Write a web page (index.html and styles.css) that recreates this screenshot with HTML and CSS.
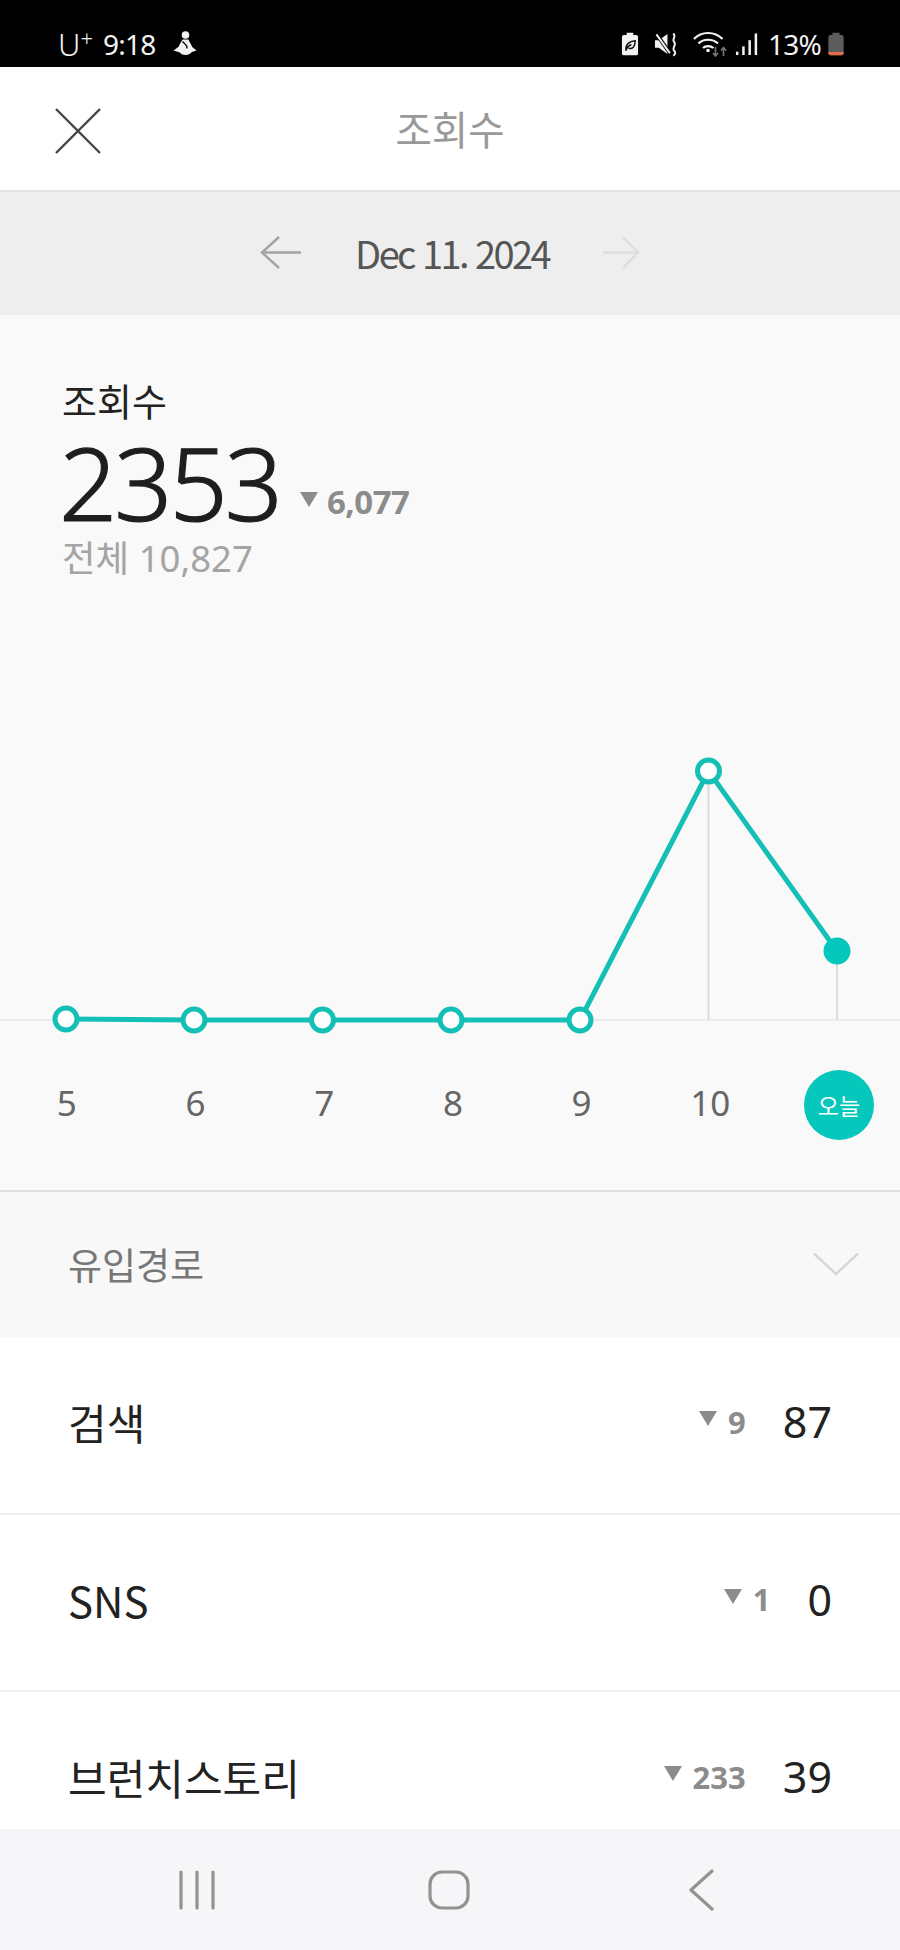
FILE: index.html
```html
<!DOCTYPE html>
<html lang="ko">
<head>
  <meta charset="UTF-8">
  <meta name="viewport" content="width=device-width, initial-scale=1.0">
  <title>조회수</title>
  <link rel="stylesheet" href="styles.css">
</head>
<body>
  <div class="screen">
    <!-- Status bar -->
    <div class="status">
      <div class="status-left">
        <span class="carrier">U<sup>+</sup></span>
        <span class="clock">9:18</span>
        <svg class="ic-person" width="24" height="27" viewBox="0 0 24 26">
          <circle cx="12.5" cy="4.500" r="3.800" fill="#f2f2f2"/>
          <path d="M9.500 9 C8 12 6 14 5.500 17 C5 21 8 24.500 12.500 24.500 C17 24.500 20 21.500 19.500 18 C19 14.500 16.500 12 15.500 9 Z" fill="#f2f2f2"/>
          <path d="M0.500 20 L6 16 L7 22 Z M23.500 20 L18.500 16 L17.500 22 Z" fill="#f2f2f2"/>
          <path d="M9.500 11 C12 14 14.500 14 14 18" stroke="#000" stroke-width="1.300" fill="none"/>
        </svg>
      </div>
      <div class="status-right">
        <svg width="18" height="26" viewBox="0 0 19 26">
          <path d="M6 1 H13 V3.500 H16 Q18 3.500 18 5.500 V23 Q18 25 16 25 H3 Q1 25 1 23 V5.500 Q1 3.500 3 3.500 H6 Z" fill="#f2f2f2"/>
          <path d="M5 19 C5 12 9 10 15 9.500 C15 16 12 18.500 8 17.500 M5 20 C6.500 16 8.500 14.500 11 13.500" stroke="#111" stroke-width="1.500" fill="none"/>
        </svg>
        <svg class="ic-mute" width="25" height="26" viewBox="0 0 26 26">
          <path d="M1 9 H5 L14 2.500 V23.500 L5 17 H1 Z" fill="#f2f2f2"/>
          <path d="M2 2 L17 23" stroke="#000" stroke-width="4"/>
          <path d="M2.500 3 L16.500 22.500" stroke="#f2f2f2" stroke-width="2"/>
          <path d="M20 2 C24 5 18 8 21 11 C24 14 18 17 21 20 C23 22 22 24 20 25" stroke="#f2f2f2" stroke-width="2" fill="none"/>
        </svg>
        <svg class="ic-wifi" width="37" height="28" viewBox="0 0 34 28">
          <path d="M1.500 9 C9 1 22 1 30 9 M6 13.500 C11 8.500 20 8.500 25.500 13.500 M10.500 18 C13 15.500 18 15.500 21 18" stroke="#f2f2f2" stroke-width="2.200" fill="none"/>
          <circle cx="15.500" cy="20.500" r="1.800" fill="#f2f2f2"/>
          <path d="M23 17 V25 M20.500 23 L23 26 L25.500 23" stroke="#777" stroke-width="1.600" fill="none"/>
          <path d="M31 26 V18 M28.500 20.500 L31 17.500 L33.500 20.500" stroke="#777" stroke-width="1.600" fill="none"/>
        </svg>
        <svg class="ic-signal" width="23" height="26" viewBox="0 0 24 26">
          <rect x="1" y="21" width="2.600" height="3.500" fill="#f2f2f2"/>
          <rect x="7.500" y="15.500" width="2.600" height="9" fill="#f2f2f2"/>
          <rect x="14" y="9" width="2.600" height="15.500" fill="#f2f2f2"/>
          <rect x="20.500" y="2" width="2.600" height="22.500" fill="#f2f2f2"/>
        </svg>
        <span class="percent">13%</span>
        <svg class="ic-battery" width="18" height="26" viewBox="0 0 20 27">
          <path d="M6 1 H14 V3.500 H16 Q18.500 3.500 18.500 6 V23.500 Q18.500 26 16 26 H4 Q1.500 26 1.500 23.500 V6 Q1.500 3.500 4 3.500 H6 Z" fill="#5c5c5c"/>
          <path d="M1.500 22.500 H18.500 V23.500 Q18.500 26 16 26 H4 Q1.500 26 1.500 23.500 Z" fill="#e8694a"/>
        </svg>
      </div>
    </div>

    <!-- App bar -->
    <header class="appbar">
      <svg class="close" width="46" height="46" viewBox="0 0 46 46">
        <path d="M1 1 L45 45 M45 1 L1 45" stroke="#444" stroke-width="2.400" fill="none"/>
      </svg>
      <h1 class="title">조회수</h1>
    </header>

    <!-- Date switcher -->
    <div class="datebar">
      <svg width="42" height="34" viewBox="0 0 42 34">
        <path d="M41 16.500 H2 M19 1 L2 16.500 L19 32" stroke="#a3a3a3" stroke-width="2.400" fill="none"/>
      </svg>
      <span class="date">Dec 11. 2024</span>
      <svg width="38" height="34" viewBox="0 0 38 34">
        <path d="M1 16.500 H36 M21 1 L36 16.500 L21 32" stroke="#dedede" stroke-width="2.400" fill="none"/>
      </svg>
    </div>

    <!-- Summary and chart -->
    <section class="stats">
      <div class="summary">
        <div class="label">조회수</div>
        <div class="total-row">
          <span class="total">2353</span>
          <span class="delta delta-big"><i class="tri"></i>6,077</span>
        </div>
        <div class="overall">전체 10,827</div>
      </div>

      <svg class="chart" width="900" height="400" viewBox="0 640 900 400">
        <path d="M0 1020 H900" stroke="#ececec" stroke-width="2"/>
        <path d="M708.500 771 V1020 M837 951 V1020" stroke="#dcdcdc" stroke-width="2"/>
        <path d="M66 1019 L194 1020 H580 L708.500 771 L837 951" stroke="#14bfb6" stroke-width="5" fill="none"/>
        <g fill="#fff" stroke="#14bfb6" stroke-width="5">
          <circle cx="66" cy="1019" r="11"/>
          <circle cx="194" cy="1020" r="11"/>
          <circle cx="322.500" cy="1020" r="11"/>
          <circle cx="451" cy="1020" r="11"/>
          <circle cx="580" cy="1020" r="11"/>
          <circle cx="708.500" cy="771" r="11"/>
        </g>
        <circle cx="837" cy="951" r="13.500" fill="#06c7bb"/>
      </svg>

      <div class="axis">
        <span>5</span>
        <span>6</span>
        <span>7</span>
        <span>8</span>
        <span>9</span>
        <span>10</span>
        <span><b class="today">오늘</b></span>
      </div>
    </section>

    <!-- Inflow header -->
    <div class="inflow">
      <span>유입경로</span>
      <svg width="46" height="24" viewBox="0 0 46 24">
        <path d="M1 1.500 L23 22 L45 1.500" stroke="#d6d6d6" stroke-width="2.400" fill="none"/>
      </svg>
    </div>

    <!-- Inflow rows -->
    <div class="rows">
      <div class="row">
        <span class="row-name">검색</span>
        <span class="delta"><i class="tri"></i>9</span>
        <span class="row-num">87</span>
      </div>
      <div class="row">
        <span class="row-name">SNS</span>
        <span class="delta"><i class="tri"></i>1</span>
        <span class="row-num">0</span>
      </div>
      <div class="row">
        <span class="row-name">브런치스토리</span>
        <span class="delta"><i class="tri"></i>233</span>
        <span class="row-num">39</span>
      </div>
    </div>

    <!-- System nav -->
    <nav class="sysnav">
      <svg width="38" height="40" viewBox="0 0 38 40">
        <path d="M3 2 V38 M19 2 V38 M35 2 V38" stroke="#929292" stroke-width="3.200" stroke-linecap="round"/>
      </svg>
      <svg width="42" height="40" viewBox="0 0 42 40">
        <rect x="2" y="2" width="38" height="36" rx="12" stroke="#929292" stroke-width="3.200" fill="none"/>
      </svg>
      <svg width="26" height="42" viewBox="0 0 26 42">
        <path d="M24 2 L3 21 L24 40" stroke="#929292" stroke-width="3.200" stroke-linecap="round" stroke-linejoin="round" fill="none"/>
      </svg>
    </nav>
  </div>
</body>
</html>
```

FILE: styles.css
```css
* { box-sizing: border-box; }
html, body { margin: 0; padding: 0; }
body { font-family: "Noto Sans CJK KR", "Noto Sans", sans-serif; background: #fff; }
svg { display: block; flex-shrink: 0; }

.screen { width: 900px; height: 1950px; display: flex; flex-direction: column; overflow: hidden; }

/* status bar */
.status { height: 67px; flex-shrink: 0; background: #000; color: #f2f2f2; display: flex; justify-content: space-between; align-items: center; padding: 20px 55px 0 58px; font-size: 28px; font-family: "Noto Sans", sans-serif; }
.status-left { display: flex; align-items: center; }
.status-right { display: flex; align-items: center; }
.carrier { width: 45px; line-height: 30px; font-size: 31px; font-weight: 300; }
.carrier sup { font-size: 22px; line-height: 0; vertical-align: 9px; }
.clock { letter-spacing: -0.8px; }
.ic-person { margin-left: 18px; }
.ic-mute { margin-left: 15px; }
.ic-wifi { margin-left: 12px; }
.ic-signal { margin-left: 7px; }
.percent { margin-left: 10px; letter-spacing: -0.8px; }
.ic-battery { margin-left: 6px; }

/* app bar */
.appbar { height: 125px; flex-shrink: 0; background: #fff; border-bottom: 2px solid #e4e4e4; display: flex; align-items: center; justify-content: center; position: relative; padding-bottom: 2px; }
.close { position: absolute; left: 55px; top: 41px; }
.title { margin: 0; font-size: 39.500px; font-weight: 400; color: #999; }

/* date */
.datebar { height: 123px; flex-shrink: 0; background: #eee; display: flex; align-items: center; justify-content: center; gap: 53px; padding-bottom: 2px; }
.date { font-size: 38px; color: #555; letter-spacing: -2.600px; }

/* summary */
.stats { height: 877px; flex-shrink: 0; background: #f9f9f9; border-bottom: 2px solid #e0e0e0; }
.summary { padding: 60px 0 0 62px; height: 325px; }
.label { font-size: 38px; line-height: 50px; color: #222; }
.total-row { display: flex; align-items: baseline; height: 100px; line-height: 100px; margin-top: 7px; }
.total { font-size: 102px; font-weight: 300; color: #1e1e1e; -webkit-text-stroke: 1.200px #1e1e1e; letter-spacing: -3px; margin-left: -3px; font-family: "Noto Sans", sans-serif; }
.overall { font-size: 36.500px; line-height: 52px; color: #a4a4a4; font-family: "Noto Sans", "Noto Sans CJK KR", sans-serif; }
.delta { display: inline-flex; align-items: center; font-weight: 700; color: #8c8c8c; font-size: 31px; font-family: "Noto Sans", sans-serif; }
.delta-big { align-self: flex-start; font-size: 33px; margin: 20px 0 0 20px; letter-spacing: -0.5px; }
.tri { display: block; width: 0; height: 0; margin-right: 9px; margin-top: -6px; border-left: 9px solid transparent; border-right: 9px solid transparent; border-top: 15px solid #8c8c8c; }

/* chart */
.axis { display: grid; grid-template-columns: repeat(7, 128.700px); padding: 39px 0 0 2.500px; font-size: 35px; color: #666; text-align: center; line-height: 48px; font-family: "Noto Sans", sans-serif; }
.axis span { display: block; }
.today { display: flex; width: 70px; height: 70px; margin: -9px auto 0; border-radius: 50%; background: #06c7bb; color: #fff; font-size: 23px; font-weight: 400; align-items: center; justify-content: center; font-family: "Noto Sans CJK KR", sans-serif; }

/* inflow */
.inflow { height: 145px; flex-shrink: 0; background: #f8f8f8; display: flex; align-items: center; justify-content: space-between; padding: 0 41px 2px 68px; font-size: 37px; color: #777; }

.rows { flex: 1; min-height: 0; overflow: hidden; background: #fff; }
.row { height: 177.500px; display: flex; align-items: center; padding: 0 68px 6px 68px; border-bottom: 2px solid #efefef; }
.row-name { flex: 1; font-size: 42px; color: #222; font-family: "Noto Sans CJK KR", sans-serif; }
.row-num { font-size: 43px; color: #222; margin-left: 37px; font-family: "Noto Sans", sans-serif; }
.row .tri { margin-right: 11px; }

/* nav */
.sysnav { height: 121px; flex-shrink: 0; background: #f6f6f8; display: flex; align-items: center; padding: 0 0 0 178px; }
.sysnav svg:nth-child(1) { margin-right: 212px; }
.sysnav svg:nth-child(2) { margin-right: 218px; }
```
